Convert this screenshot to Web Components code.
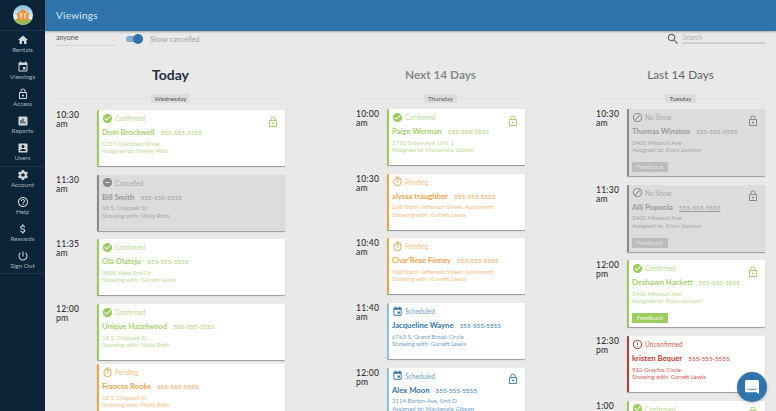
<!DOCTYPE html>
<html lang="en">
<head>
<meta charset="utf-8">
<title>Viewings</title>
<style>
  html, body { margin: 0; height: 100%; overflow: hidden; }
  body { font-family: Lato, "Open Sans", sans-serif; background: #e9e9e9; }
  tt-app { height: 411px; }
</style>
</head>
<body>
<tt-app>
  <tt-sidebar slot="side">
    <tt-nav-item icon="home" label="Rentals"></tt-nav-item>
    <tt-nav-item icon="event" label="Viewings"></tt-nav-item>
    <tt-nav-item icon="lock" label="Access"></tt-nav-item>
    <tt-nav-item icon="chart" label="Reports"></tt-nav-item>
    <tt-nav-item icon="user" label="Users"></tt-nav-item>
    <tt-nav-item icon="gear" label="Account" divided></tt-nav-item>
    <tt-nav-item icon="help" label="Help"></tt-nav-item>
    <tt-nav-item icon="dollar" label="Rewards"></tt-nav-item>
    <tt-nav-item icon="power" label="Sign Out" closing></tt-nav-item>
  </tt-sidebar>
  <tt-topbar slot="top" title="Viewings"></tt-topbar>
  <tt-filters slot="top"></tt-filters>

  <tt-column heading="Today" tone="strong" time-width="41" first-gap="7" style="width:229px">
    <tt-day label="Wednesday"></tt-day>
    <tt-viewing time="10:30" ampm="am" status="confirmed" name="Dom Brockwell" locked>
      <div>5237 Oakforest Drive</div><div>Assigned to: Hayley Mills</div>
    </tt-viewing>
    <tt-viewing time="11:30" ampm="am" status="cancelled" name="Bill Smith">
      <div>18 S. Chappell St.</div><div>Showing with: Molly Roth</div>
    </tt-viewing>
    <tt-viewing time="11:35" ampm="am" status="confirmed" name="Ola Olateju">
      <div>3808 West End Dr</div><div>Showing with: Garrett Lewis</div>
    </tt-viewing>
    <tt-viewing time="12:00" ampm="pm" status="confirmed" name="Unique Hazelwood" tight>
      <div>18 S. Chappell St.</div><div>Showing with: Molly Roth</div>
    </tt-viewing>
    <tt-viewing status="pending" name="Frances Rooks">
      <div>18 S. Chappell St.</div><div>Showing with: Molly Roth</div>
    </tt-viewing>
  </tt-column>

  <tt-column heading="Next 14 Days" tone="mid" time-width="31" first-gap="6" style="width:169px">
    <tt-day label="Thursday"></tt-day>
    <tt-viewing time="10:00" ampm="am" status="confirmed" name="Paige Werman" locked>
      <div>1720 Grove Ave, Unit 1</div><div>Assigned to: Mackenzie Gibson</div>
    </tt-viewing>
    <tt-viewing time="10:30" ampm="am" status="pending" name="alyssa traughber">
      <div>108 North Jefferson Street, Apartment</div><div>Showing with: Garrett Lewis</div>
    </tt-viewing>
    <tt-viewing time="10:40" ampm="am" status="pending" name="Char'Rese Finney">
      <div>108 North Jefferson Street, Apartment</div><div>Showing with: Garrett Lewis</div>
    </tt-viewing>
    <tt-viewing time="11:40" ampm="am" status="scheduled" name="Jacqueline Wayne">
      <div>6763 S. Grand Brook Circle</div><div>Showing with: Garrett Lewis</div>
    </tt-viewing>
    <tt-viewing time="12:00" ampm="pm" status="scheduled" name="Alex Moon" locked>
      <div>3114 Barton Ave, Unit D</div><div>Assigned to: Mackenzie Gibson</div>
    </tt-viewing>
  </tt-column>

  <tt-column heading="Last 14 Days" tone="soft" time-width="31" first-gap="6" style="width:169px">
    <tt-day label="Tuesday"></tt-day>
    <tt-viewing time="10:30" ampm="am" status="noshow" name="Thomas Winston" locked feedback>
      <div>3400 Missouri Ave</div><div>Assigned to: Kiara Jackson</div>
    </tt-viewing>
    <tt-viewing time="11:30" ampm="am" status="noshow" name="Alli Popoola" locked feedback underline>
      <div>3400 Missouri Ave</div><div>Assigned to: Kiara Jackson</div>
    </tt-viewing>
    <tt-viewing time="12:00" ampm="pm" status="confirmed" name="Deshawn Hackett" locked feedback>
      <div>3400 Missouri Ave</div><div>Assigned to: Kiara Jackson</div>
    </tt-viewing>
    <tt-viewing time="12:30" ampm="pm" status="unconfirmed" name="kristen Bequer">
      <div>910 Grayfox Circle</div><div>Showing with: Garrett Lewis</div>
    </tt-viewing>
    <tt-viewing time="1:00" ampm="pm" status="confirmed" name="Deshawn Hackett" locked>
      <div>3400 Missouri Ave</div><div>Assigned to: Kiara Jackson</div>
    </tt-viewing>
  </tt-column>

  <tt-chat slot="over"></tt-chat>
</tt-app>

<script>
const ICONS = {
  home: "M10 20v-6h4v6h5v-8h3L12 3 2 12h3v8z",
  event: "M17 12h-5v5h5v-5zM16 1v2H8V1H6v2H5c-1.11 0-1.99.9-1.99 2L3 19c0 1.1.89 2 2 2h14c1.1 0 2-.9 2-2V5c0-1.1-.9-2-2-2h-1V1h-2zm3 18H5V8h14v11z",
  lock: "M12 17c1.1 0 2-.9 2-2s-.9-2-2-2-2 .9-2 2 .9 2 2 2zm6-9h-1V6c0-2.76-2.24-5-5-5S7 3.24 7 6v2H6c-1.1 0-2 .9-2 2v10c0 1.1.9 2 2 2h12c1.1 0 2-.9 2-2V10c0-1.1-.9-2-2-2zM8.9 6c0-1.71 1.39-3.1 3.1-3.1s3.1 1.39 3.1 3.1v2H8.9V6zM18 20H6V10h12v10z",
  chart: "M19 3H5c-1.1 0-2 .9-2 2v14c0 1.1.9 2 2 2h14c1.1 0 2-.9 2-2V5c0-1.1-.9-2-2-2zM9 17H7v-7h2v7zm4 0h-2V7h2v10zm4 0h-2v-4h2v4z",
  user: "M3 5v14c0 1.1.89 2 2 2h14c1.1 0 2-.9 2-2V5c0-1.1-.9-2-2-2H5c-1.11 0-2 .9-2 2zm12 4c0 1.66-1.34 3-3 3s-3-1.34-3-3 1.34-3 3-3 3 1.34 3 3zm-9 8c0-2 4-3.1 6-3.1s6 1.1 6 3.1v1H6v-1z",
  gear: "M19.43 12.98c.04-.32.07-.64.07-.98s-.03-.66-.07-.98l2.11-1.65c.19-.15.24-.42.12-.64l-2-3.46c-.12-.22-.39-.3-.61-.22l-2.49 1c-.52-.4-1.08-.73-1.69-.98l-.38-2.65C14.46 2.18 14.25 2 14 2h-4c-.25 0-.46.18-.49.42l-.38 2.65c-.61.25-1.17.59-1.69.98l-2.49-1c-.23-.09-.49 0-.61.22l-2 3.46c-.13.22-.07.49.12.64l2.11 1.65c-.04.32-.07.65-.07.98s.03.66.07.98l-2.11 1.65c-.19.15-.24.42-.12.64l2 3.46c.12.22.39.3.61.22l2.49-1c.52.4 1.08.73 1.69.98l.38 2.65c.03.24.24.42.49.42h4c.25 0 .46-.18.49-.42l.38-2.65c.61-.25 1.17-.59 1.69-.98l2.49 1c.23.09.49 0 .61-.22l2-3.46c.12-.22.07-.49-.12-.64l-2.11-1.65zM12 15.5c-1.93 0-3.5-1.57-3.5-3.5s1.57-3.5 3.5-3.5 3.5 1.57 3.5 3.5-1.57 3.5-3.5 3.5z",
  help: "M11 18h2v-2h-2v2zm1-16C6.48 2 2 6.48 2 12s4.48 10 10 10 10-4.48 10-10S17.52 2 12 2zm0 18c-4.41 0-8-3.59-8-8s3.59-8 8-8 8 3.59 8 8-3.59 8-8 8zm0-14c-2.21 0-4 1.79-4 4h2c0-1.1.9-2 2-2s2 .9 2 2c0 2-3 1.75-3 5h2c0-2.25 3-2.5 3-5 0-2.21-1.79-4-4-4z",
  dollar: "M11.8 10.9c-2.27-.59-3-1.2-3-2.15 0-1.09 1.01-1.85 2.7-1.85 1.78 0 2.44.85 2.5 2.1h2.21c-.07-1.72-1.12-3.3-3.21-3.81V3h-3v2.16c-1.94.42-3.5 1.68-3.5 3.61 0 2.31 1.91 3.46 4.7 4.13 2.5.6 3 1.48 3 2.41 0 .69-.49 1.79-2.7 1.79-2.06 0-2.87-.92-2.98-2.1h-2.2c.12 2.19 1.76 3.42 3.68 3.83V21h3v-2.15c1.95-.37 3.5-1.5 3.5-3.55 0-2.84-2.43-3.81-4.7-4.4z",
  power: "M13 3h-2v10h2V3zm4.83 2.17l-1.42 1.42C17.99 7.86 19 9.81 19 12c0 3.87-3.13 7-7 7s-7-3.13-7-7c0-2.19 1.01-4.14 2.58-5.42L6.17 5.17C4.23 6.82 3 9.26 3 12c0 4.97 4.03 9 9 9s9-4.03 9-9c0-2.74-1.23-5.18-3.17-6.83z",
  check: "M12 2C6.48 2 2 6.48 2 12s4.48 10 10 10 10-4.48 10-10S17.52 2 12 2zm-2 15l-5-5 1.41-1.41L10 14.17l7.59-7.59L19 8l-9 9z",
  minus: "M12 2C6.48 2 2 6.48 2 12s4.48 10 10 10 10-4.48 10-10S17.52 2 12 2zm5 11H7v-2h10v2z",
  timer: "M15 1H9v2h6V1zm-4 13h2V8h-2v6zm8.03-6.61l1.42-1.42c-.43-.51-.9-.99-1.41-1.41l-1.42 1.42C16.07 4.74 14.12 4 12 4c-4.97 0-9 4.03-9 9s4.02 9 9 9 9-4.03 9-9c0-2.12-.74-4.07-1.97-5.61zM12 20c-3.87 0-7-3.13-7-7s3.13-7 7-7 7 3.13 7 7-3.13 7-7 7z",
  block: "M12 2C6.48 2 2 6.48 2 12s4.48 10 10 10 10-4.48 10-10S17.52 2 12 2zM4 12c0-4.42 3.58-8 8-8 1.85 0 3.55.63 4.9 1.69L5.69 16.9C4.63 15.55 4 13.85 4 12zm8 8c-1.85 0-3.55-.63-4.9-1.69L18.31 7.1C19.37 8.45 20 10.15 20 12c0 4.42-3.58 8-8 8z",
  alert: "M11 15h2v2h-2zm0-8h2v6h-2zm.99-5C6.47 2 2 6.48 2 12s4.47 10 9.99 10C17.52 22 22 17.52 22 12S17.52 2 11.99 2zM12 20c-4.42 0-8-3.58-8-8s3.58-8 8-8 8 3.58 8 8-3.58 8-8 8z",
  search: "M15.5 14h-.79l-.28-.27C15.41 12.59 16 11.11 16 9.5 16 5.91 13.09 3 9.5 3S3 5.91 3 9.5 5.91 16 9.5 16c1.61 0 3.09-.59 4.23-1.57l.27.28v.79l5 4.99L20.49 19l-4.99-5zm-6 0C7.01 14 5 11.99 5 9.5S7.01 5 9.5 5 14 7.01 14 9.5 11.99 14 9.5 14z"
};

function icon(name, size) {
  return `<svg width="${size}" height="${size}" viewBox="0 0 24 24" fill="currentColor"><path d="${ICONS[name]}"/></svg>`;
}

const STATUS = {
  confirmed: { label: "Confirmed", icon: "check", color: "#9ccb5e", text: "#b9da92", name: "#a6d06c", card: "#fff", lock: "#a9d271", fb: "#9ccb5e", fbText: "#eef6e2" },
  cancelled: { label: "Cancelled", icon: "minus", color: "#8a8a8a", text: "#a8a8a8", name: "#9a9a9a", card: "#dcdcdc", lock: "#8a8a8a" },
  pending: { label: "Pending", icon: "timer", color: "#f0a24c", text: "#f5bd80", name: "#f0a24c", card: "#fff", lock: "#f0a24c" },
  scheduled: { label: "Scheduled", icon: "event", color: "#2f75ab", text: "#6f9fc6", name: "#2f75ab", card: "#fff", edge: "#8cc4e8", lock: "#4a88b8" },
  noshow: { label: "No Show", icon: "block", color: "#8a8a8a", text: "#a8a8a8", name: "#9a9a9a", card: "#dcdcdc", lock: "#8a8a8a", fb: "#bcbcbc", fbText: "#e0e0e0" },
  unconfirmed: { label: "Unconfirmed", icon: "alert", color: "#c0392f", text: "#cf5a52", name: "#c0392f", card: "#fff", lock: "#c0392f" }
};

class TtApp extends HTMLElement {
  constructor() {
    super();
    this.attachShadow({ mode: "open" });
    this.shadowRoot.innerHTML = `
      <style>
        :host { display: flex; width: 776px; overflow: hidden; position: relative; }
        .main { flex: 1; min-width: 0; display: flex; flex-direction: column; }
        .cols { display: flex; flex: none; gap: 71px; padding: 0 11px; }
      </style>
      <slot name="side"></slot>
      <div class="main">
        <slot name="top"></slot>
        <div class="cols"><slot></slot></div>
      </div>
      <slot name="over"></slot>
    `;
  }
}

class TtSidebar extends HTMLElement {
  constructor() {
    super();
    this.attachShadow({ mode: "open" });
    this.shadowRoot.innerHTML = `
      <style>
        :host { display: block; width: 45px; height: 411px; flex: none; background: #0c2438; }
        .logo { height: 30px; display: flex; align-items: center; justify-content: center; border-bottom: 1px solid #1c3549; }
      </style>
      <div class="logo">
        <svg width="20" height="20" viewBox="0 0 24 24">
          <defs>
            <clipPath id="c"><circle cx="12" cy="12" r="12"/></clipPath>
            <linearGradient id="sky" x1="0" y1="0" x2="0" y2="1">
              <stop offset="0" stop-color="#7fbde6"/><stop offset=".65" stop-color="#eef6f8"/>
            </linearGradient>
          </defs>
          <g clip-path="url(#c)">
            <rect width="24" height="24" fill="url(#sky)"/>
            <path d="M0 18c6-3 18-3 24 0v6H0z" fill="#8fc05a"/>
            <path d="M3.5 11.5 12 4.5l8.5 7-1.8.6V18.500H5.300v-6.400z" fill="#ee9240"/>
            <path d="M7.800 10.500h3.600M9.600 10.500v6M12.600 10.500h3.600M14.400 10.500v6" stroke="#fdeede" stroke-width="1.300" fill="none"/>
          </g>
        </svg>
      </div>
      <slot></slot>
    `;
  }
}

class TtNavItem extends HTMLElement {
  constructor() {
    super();
    this.attachShadow({ mode: "open" });
  }

  connectedCallback() {
    const divided = this.hasAttribute("divided");
    const closing = this.hasAttribute("closing");
    this.shadowRoot.innerHTML = `
      <style>
        :host { display: block; height: 27px; box-sizing: border-box; color: #d3d6d9; text-align: center;
          ${divided ? "border-top: 1px solid #1c3549;" : ""}
          ${closing ? "border-bottom: 1px solid #1c3549;" : ""} }
        svg { display: block; margin: 0 auto; padding-top: ${divided ? 2 : 3}px; }
        span { display: block; font-size: 6.4px; line-height: 8px; color: #a9b1b8; }
      </style>
      ${icon(this.getAttribute("icon"), 12)}
      <span>${this.getAttribute("label")}</span>
    `;
  }
}

class TtTopbar extends HTMLElement {
  constructor() {
    super();
    this.attachShadow({ mode: "open" });
  }

  connectedCallback() {
    this.shadowRoot.innerHTML = `
      <style>
        :host { display: block; flex: none; height: 31px; background: #2f75ab; color: #d9e6f0; box-shadow: 0 1px 2px rgba(0,0,0,.3);
          font-size: 10px; line-height: 30px; padding-left: 11px; letter-spacing: .25px; }
      </style>
      ${this.getAttribute("title")}
    `;
  }
}

class TtFilters extends HTMLElement {
  constructor() {
    super();
    this.attachShadow({ mode: "open" });
    this.shadowRoot.innerHTML = `
      <style>
        :host { display: flex; flex: none; height: 25px; padding: 0 11px; box-sizing: border-box; align-items: flex-start; }
        .who { width: 59px; height: 14px; border-bottom: 1px solid #d4d4d4; font-size: 7px; line-height: 13px; color: #555; }
        .switch { position: relative; width: 17px; height: 6px; margin: 5px 0 0 11px; border-radius: 3px; background: #7ba9cf; }
        .switch::after { content: ""; position: absolute; right: 0; top: -2px; width: 10px; height: 10px; border-radius: 50%; background: #2f75ab; }
        .lbl { margin: 3px 0 0 7px; font-size: 7.3px; line-height: 11px; color: #a3a3a3; }
        .find { margin-left: auto; display: flex; align-items: flex-start; color: #666; }
        .find svg { margin: 1px 2px 0 0; }
        .box { width: 83px; height: 11px; border-bottom: 2px solid #cfcfcf; font-size: 7px; line-height: 12px; color: #b5b5b5; }
      </style>
      <div class="who">anyone</div>
      <div class="switch"></div>
      <div class="lbl">Show cancelled</div>
      <div class="find">${icon("search", 14)}<div class="box">Search</div></div>
    `;
  }
}

class TtColumn extends HTMLElement {
  constructor() {
    super();
    this.attachShadow({ mode: "open" });
  }

  connectedCallback() {
    const tones = {
      strong: "color:#1f2f3d;font-weight:700;font-size:14px",
      mid: "color:#8a8a8a;font-weight:700;font-size:11.800px",
      soft: "color:#666;font-weight:400;font-size:11.800px"
    };
    this.style.setProperty("--time-width", this.getAttribute("time-width") + "px");
    this.style.setProperty("--first-gap", this.getAttribute("first-gap") + "px");
    this.shadowRoot.innerHTML = `
      <style>
        :host { display: block; flex: none; }
        h2 { margin: 0; height: 38px; line-height: 38px; text-align: center; ${tones[this.getAttribute("tone")]}; }
      </style>
      <h2>${this.getAttribute("heading")}</h2>
      <slot></slot>
    `;
  }
}

class TtDay extends HTMLElement {
  constructor() {
    super();
    this.attachShadow({ mode: "open" });
  }

  connectedCallback() {
    this.shadowRoot.innerHTML = `
      <style>
        :host { display: block; margin-bottom: var(--first-gap); height: 9px; position: relative; text-align: center;
          background: linear-gradient(#e2e2e2, #e2e2e2) center / 100% 1px no-repeat; }
        span { display: inline-block; padding: 0 4px; height: 9px; line-height: 9px; background: #dcdcdc; color: #555; font-size: 6.2px; vertical-align: top; }
      </style>
      <span>${this.getAttribute("label")}</span>
    `;
  }
}

class TtViewing extends HTMLElement {
  constructor() {
    super();
    this.attachShadow({ mode: "open" });
  }

  connectedCallback() {
    const s = STATUS[this.getAttribute("status")];
    const time = this.getAttribute("time");
    const feedback = this.hasAttribute("feedback");
    const tight = this.hasAttribute("tight");
    const phone = this.hasAttribute("underline") ? "text-decoration: underline;" : "";
    this.shadowRoot.innerHTML = `
      <style>
        :host { display: grid; grid-template-columns: var(--time-width) 1fr; margin-bottom: ${tight ? 4 : 8.7}px; }
        .time { font-size: 8.6px; line-height: 9px; font-weight: 500; color: #333; padding-top: 1px; letter-spacing: .2px; }
        .card { position: relative; min-height: 56px; box-sizing: border-box; padding: 2px 0 0 3px; background: ${s.card};
          border-left: 2px solid ${s.edge || s.color}; box-shadow: 0 1px 1px rgba(0,0,0,.35); border-radius: 1px; color: ${s.text}; }
        .status { display: flex; align-items: center; height: 12px; gap: 2px; font-size: 6.6px; }
        .status svg { color: ${s.color}; }
        .lock { position: absolute; right: 6px; top: 1.5px; color: ${s.lock}; }
        .who { margin-top: 3px; height: 10px; line-height: 10px; white-space: nowrap; font-size: 6.3px; color: ${s.name}; }
        .who b { font-size: 7.7px; font-weight: 700; margin-right: 4.5px; }
        .who span { ${phone} }
        .lines { margin-top: 2.5px; font-size: 6px; line-height: 7.5px; white-space: nowrap; }
        .fb { display: block; width: 36px; height: 10px; margin: 8.5px 0 4px; background: ${s.fb}; color: ${s.fbText}; font-size: 6.4px; line-height: 10px; text-align: center; }
      </style>
      <div class="time">${time ? `${time}<br>${this.getAttribute("ampm")}` : ""}</div>
      <div class="card">
        <div class="status">${icon(s.icon, 11)}${s.label}</div>
        ${this.hasAttribute("locked") ? `<div class="lock">${icon("lock", 12)}</div>` : ""}
        <div class="who"><b>${this.getAttribute("name")}</b> <span>555-555-5555</span></div>
        <div class="lines"><slot></slot></div>
        ${feedback ? `<div class="fb">Feedback</div>` : ""}
      </div>
    `;
  }
}

class TtChat extends HTMLElement {
  constructor() {
    super();
    this.attachShadow({ mode: "open" });
    this.shadowRoot.innerHTML = `
      <style>
        :host { position: absolute; right: 9px; bottom: 9px; width: 30px; height: 30px; border-radius: 50%; background: #2f75ab;
          display: flex; align-items: center; justify-content: center; box-shadow: 0 1px 3px rgba(0,0,0,.25); }
      </style>
      <svg width="14" height="14" viewBox="0 0 14 14">
        <path d="M1.500 0h11A1.500 1.500 0 0 1 14 1.500V14l-2.600-1.800H1.500A1.500 1.500 0 0 1 0 10.700V1.500A1.500 1.500 0 0 1 1.500 0z" fill="#fff"/>
        <path d="M2.500 8.800c2.700 1.300 6.300 1.300 9 0" stroke="#2f75ab" stroke-width=".9" fill="none"/>
      </svg>
    `;
  }
}

customElements.define("tt-nav-item", TtNavItem);
customElements.define("tt-sidebar", TtSidebar);
customElements.define("tt-topbar", TtTopbar);
customElements.define("tt-filters", TtFilters);
customElements.define("tt-day", TtDay);
customElements.define("tt-viewing", TtViewing);
customElements.define("tt-column", TtColumn);
customElements.define("tt-chat", TtChat);
customElements.define("tt-app", TtApp);
</script>
</body>
</html>
